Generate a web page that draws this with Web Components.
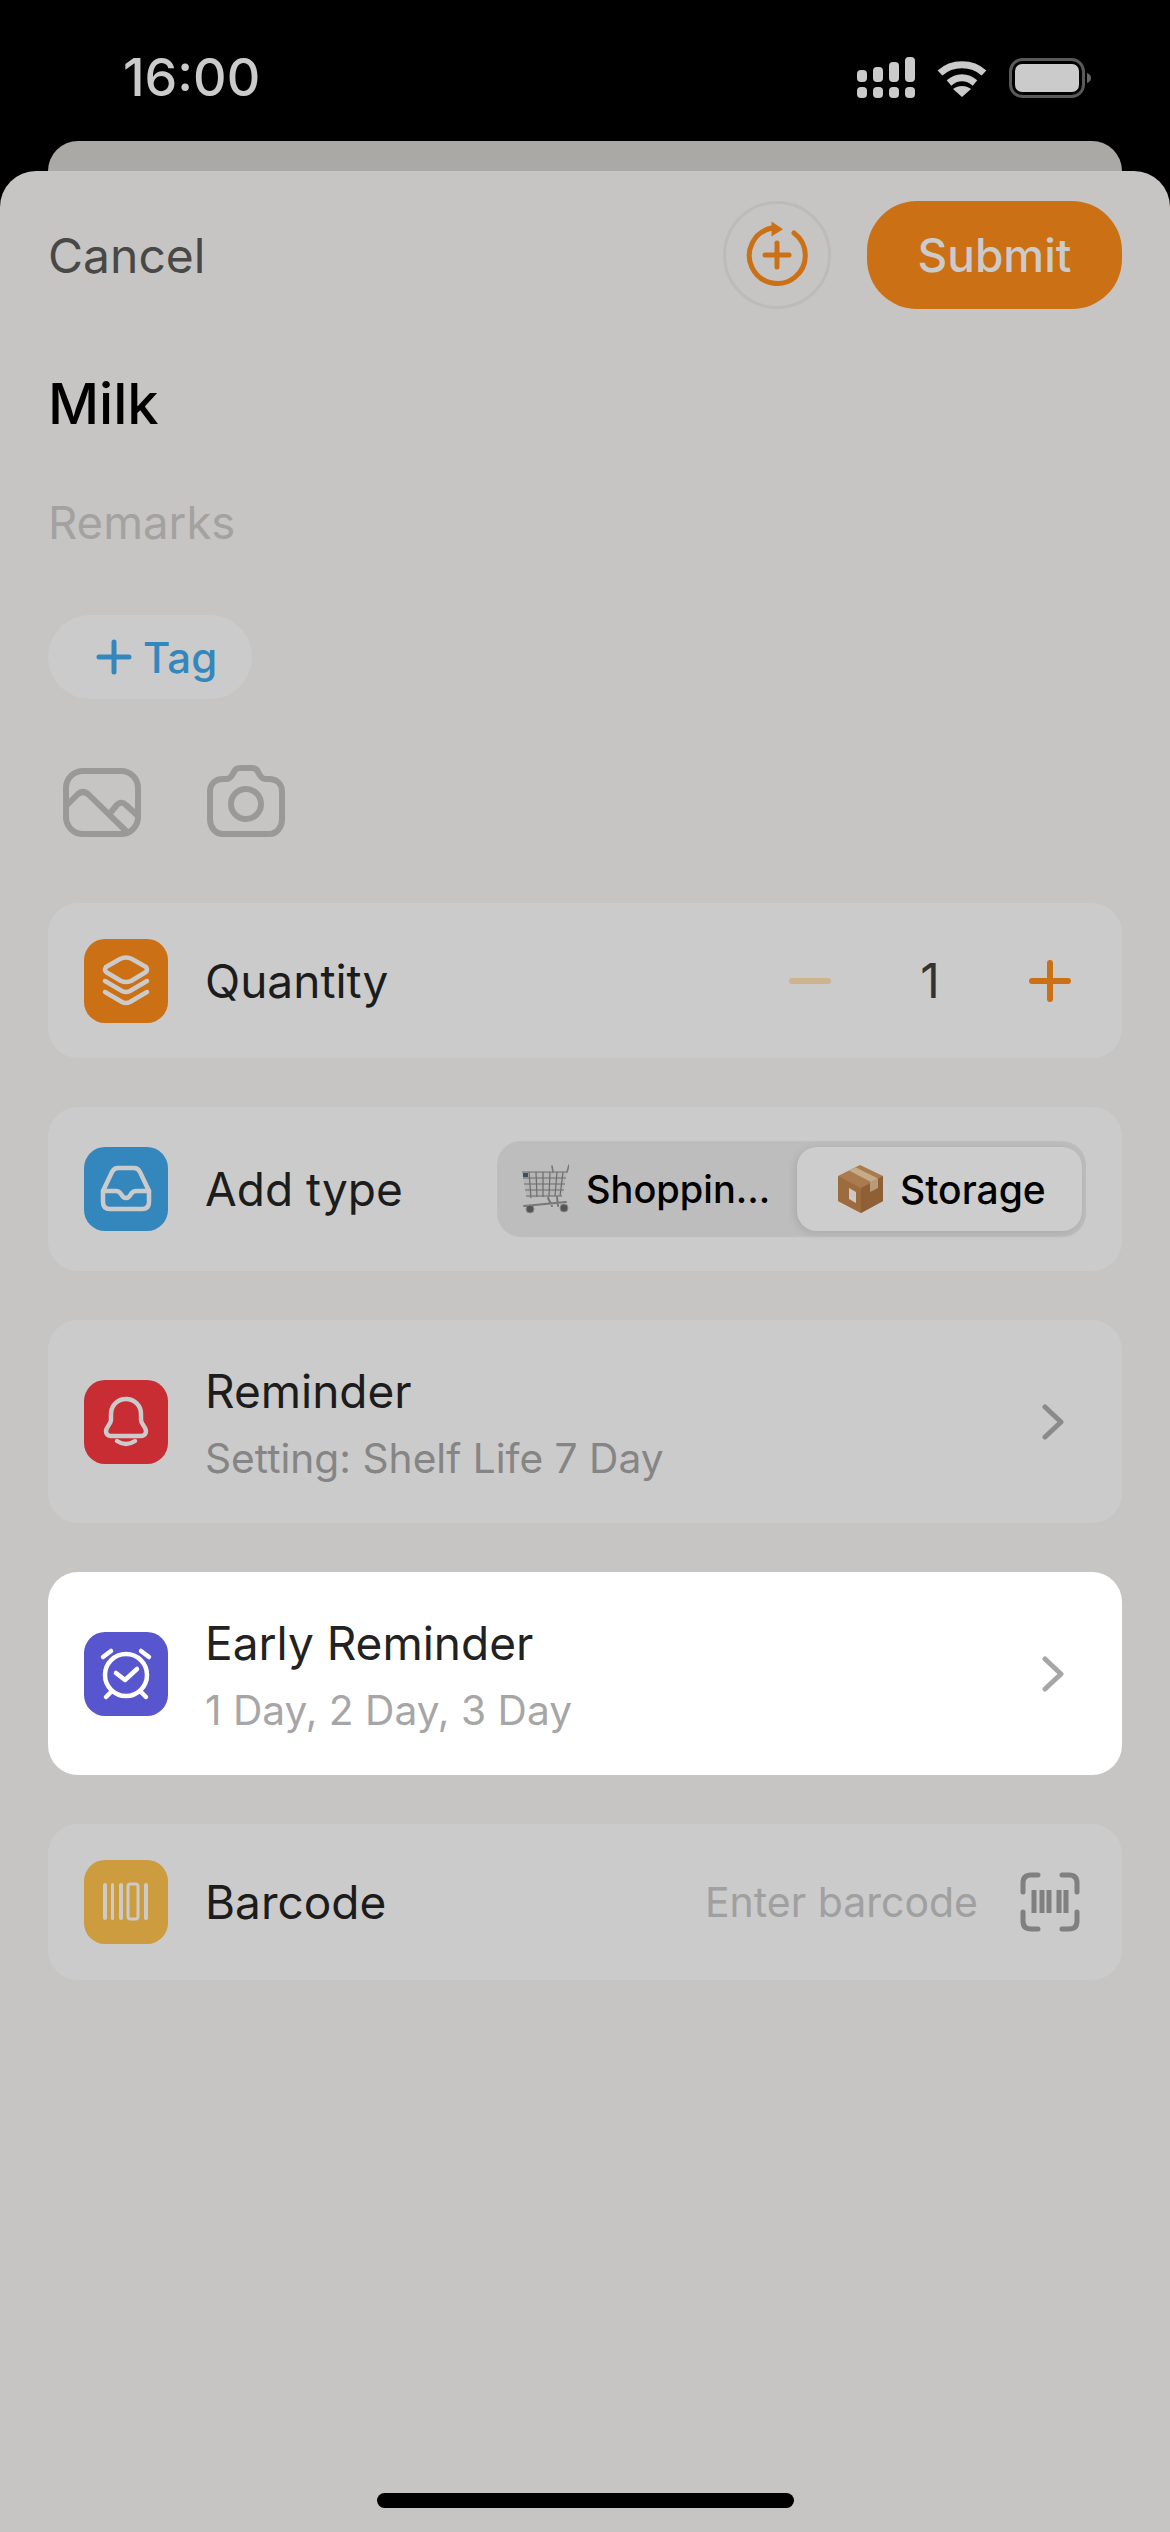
<!doctype html>
<html>
<head>
<meta charset="utf-8">
<style>
  html, body { margin: 0; padding: 0; background: #000; }
  body { font-family: Inter, "Noto Sans", sans-serif; width: 1170px; height: 2532px; overflow: hidden; }
</style>
</head>
<body>
<add-screen></add-screen>
<script>
class StatusBar extends HTMLElement {
  constructor() {
    super();
    this.attachShadow({ mode: "open" });
    this.shadowRoot.innerHTML = `
      <style>
        :host { display: flex; justify-content: space-between; align-items: flex-start; height: 141px; box-sizing: border-box; padding: 57px 79px 0 123px; background: #000; color: #cbcbcb; }
        .time { font-size: 52px; font-weight: 500; line-height: 42px; }
        .icons { display: flex; gap: 22px; }
        svg { display: block; }
      </style>
      <div class="time">16:00</div>
      <div class="icons">
        <svg width="58" height="41" viewBox="0 0 58 41" fill="#cbcbcb">
          <rect x="0" y="13" width="10" height="12" rx="4"/><rect x="16" y="10" width="10" height="15" rx="4"/>
          <rect x="32" y="5" width="10" height="20" rx="4"/><rect x="48" y="0" width="10" height="25" rx="4"/>
          <rect x="0" y="30" width="10" height="11" rx="4"/><rect x="16" y="30" width="10" height="11" rx="4"/>
          <rect x="32" y="30" width="10" height="11" rx="4"/><rect x="48" y="30" width="10" height="11" rx="4"/>
        </svg>
        <svg width="50" height="39" viewBox="0 0 50 39" style="margin-top:2px">
          <path d="M3 14 C15 3 35 3 47 14" fill="none" stroke="#cbcbcb" stroke-width="7"/>
          <path d="M12 24 C20 17 30 17 38 24" fill="none" stroke="#cbcbcb" stroke-width="7"/>
          <path d="M25 38 L16 30 C21 26 29 26 34 30 Z" fill="#cbcbcb"/>
        </svg>
        <svg width="82" height="40" viewBox="0 0 82 40" style="margin-top:1px">
          <rect x="1.5" y="1.5" width="73" height="37" rx="12" fill="none" stroke="#595959" stroke-width="3"/>
          <rect x="6" y="6" width="64" height="28" rx="7" fill="#cbcbcb"/>
          <path d="M78 15 C81 16 82 18 82 20 C82 22 81 24 78 25 Z" fill="#666"/>
        </svg>
      </div>
    `;
  }
}
customElements.define("status-bar", StatusBar);

class SheetHeader extends HTMLElement {
  constructor() {
    super();
    this.attachShadow({ mode: "open" });
    this.shadowRoot.innerHTML = `
      <style>
        :host { display: flex; align-items: center; height: 108px; }
        .cancel { font-size: 48px; color: #484846; flex: 1; }
        .round { width: 108px; height: 108px; box-sizing: border-box; border-radius: 50%; border: 3px solid #bcbbb9; margin-right: 36px; }
        .round svg { display: block; margin: -3px; }
        .submit { width: 255px; height: 108px; border-radius: 50px; background: #cb7015; color: #cbcbcb; font-size: 46px; font-weight: 500; display: flex; align-items: center; justify-content: center; }
      </style>
      <div class="cancel">Cancel</div>
      <div class="round">
        <svg width="108" height="108" viewBox="0 0 108 108" fill="none" stroke="#cb7015" stroke-width="5" stroke-linecap="round">
          <path d="M71 32 A28 28 0 1 1 49 27"/>
          <path d="M48.5 20.5 L60 28.3 L48.5 35.5 Z" fill="#cb7015" stroke="none"/>
          <path d="M54 42 V66 M42 54 H66"/>
        </svg>
      </div>
      <div class="submit">Submit</div>
    `;
  }
}
customElements.define("sheet-header", SheetHeader);

class TagPill extends HTMLElement {
  constructor() {
    super();
    this.attachShadow({ mode: "open" });
    this.shadowRoot.innerHTML = `
      <style>
        :host { display: flex; align-items: center; gap: 11px; box-sizing: border-box; padding-left: 48px; width: 204px; height: 84px; border-radius: 42px; background: #cbcbcb; color: #3487bd; font-size: 42px; font-weight: 500; }
        svg { display: block; }
      </style>
      <svg width="36" height="36" viewBox="0 0 36 36" fill="none" stroke="#3487bd" stroke-width="5" stroke-linecap="round"><path d="M18 3 V33 M3 18 H33"/></svg>
      <span>Tag</span>
    `;
  }
}
customElements.define("tag-pill", TagPill);

class IconTile extends HTMLElement {
  constructor() {
    super();
    this.attachShadow({ mode: "open" });
    this.shadowRoot.innerHTML = `
      <style>
        :host { display: block; width: 84px; height: 84px; flex: none; border-radius: 21px; background: var(--tile, #888); }
        ::slotted(svg) { display: block; }
      </style>
      <slot></slot>
    `;
  }
}
customElements.define("icon-tile", IconTile);

class AppRow extends HTMLElement {
  constructor() {
    super();
    this.attachShadow({ mode: "open" });
    this.shadowRoot.innerHTML = `
      <style>
        :host { display: flex; align-items: center; box-sizing: border-box; padding: 0 36px; border-radius: 30px; background: #cbcbcb; color: #1c1c1c; height: var(--h, 155px); }
        :host([lit]) { background: #fff; color: #222; --sub: #a6a6a6; }
        :host([sub]) .label { padding-top: 4px; }
        .label { margin-left: 37px; flex: 1; min-width: 0; }
        .title { font-size: 46px; line-height: 56px; }
        .sub { font-size: 40.7px; line-height: 50px; margin-top: 15px; color: var(--sub, #858585); }
        .sub:empty { display: none; }
        .end { display: flex; align-items: center; }
      </style>
      <slot name="icon"></slot>
      <div class="label">
        <div class="title"></div>
        <div class="sub"></div>
      </div>
      <div class="end"><slot></slot></div>
    `;
  }
  connectedCallback() {
    this.shadowRoot.querySelector(".title").textContent = this.getAttribute("title-text") || "";
    this.shadowRoot.querySelector(".sub").textContent = this.getAttribute("sub") || "";
  }
}
customElements.define("app-row", AppRow);

class QtyStepper extends HTMLElement {
  constructor() {
    super();
    this.attachShadow({ mode: "open" });
    this.shadowRoot.innerHTML = `
      <style>
        :host { display: flex; align-items: center; margin-right: 15px; }
        svg { display: block; }
        .n { width: 198px; text-align: center; font-size: 48px; color: #333; }
      </style>
      <svg width="42" height="42" viewBox="0 0 42 42" fill="none" stroke="#cdb48f" stroke-width="6" stroke-linecap="round"><path d="M3 21 H39"/></svg>
      <div class="n">1</div>
      <svg width="42" height="42" viewBox="0 0 42 42" fill="none" stroke="#cb7015" stroke-width="6" stroke-linecap="round"><path d="M3 21 H39 M21 3 V39"/></svg>
    `;
  }
}
customElements.define("qty-stepper", QtyStepper);

class TypeSwitch extends HTMLElement {
  constructor() {
    super();
    this.attachShadow({ mode: "open" });
    this.shadowRoot.innerHTML = `
      <style>
        :host { display: flex; align-items: center; box-sizing: border-box; width: 589px; height: 96px; padding: 6px 4px 6px 0; border-radius: 24px; background: #bdbdbd; font-size: 38px; font-weight: 500; color: #000; }
        .opt { display: flex; align-items: center; height: 84px; box-sizing: border-box; }
        .off { width: 300px; padding-left: 24px; gap: 17px; }
        .on { flex: 1; padding-left: 40px; gap: 16px; background: #cdcdcd; border-radius: 20px; box-shadow: -2px 2px 8px rgba(0,0,0,.1); font-size: 39px; }
        svg { display: block; flex: none; }
      </style>
      <div class="opt off">
        <svg width="48" height="50" viewBox="0 0 48 50" fill="none">
          <path d="M1 8 H46 L41 32 L6 34 Z" fill="#b5b5b5"/>
          <path d="M1 8 H46 M2 14 H45 M3 20 H44 M4 26 H43 M5 32 H41 M8 8 L10 34 M15 8 L16 33 M22 8 L22 33 M29 8 L28 33 M36 8 L34 32 M42 8 L39 32" stroke="#6d6d6d" stroke-width="1.2"/>
          <path d="M46 8 L48 1 M31 2 L32 8" stroke="#777" stroke-width="1.6" stroke-linecap="round"/>
          <path d="M27 34 L31 42 M36 33 L37 42 M3 42 L45 38" stroke="#777" stroke-width="2" stroke-linecap="round"/>
          <rect x="2" y="9" width="5" height="4" fill="#3f4d63"/>
          <circle cx="9" cy="45" r="4" fill="#555" stroke="#888"/>
          <circle cx="43" cy="44" r="4" fill="#555" stroke="#888"/>
        </svg>
        <span>Shoppin...</span>
      </div>
      <div class="opt on">
        <svg width="47" height="50" viewBox="0 0 47 50">
          <path d="M23 1 L46 12 L46 37 L24 49 L1 37 L1 12 Z" fill="#a97b4f"/>
          <path d="M1 12 L24 24 V49 L1 37 Z" fill="#9c6c3f"/>
          <path d="M24 24 L46 12 V37 L24 49 Z" fill="#8f5f35"/>
          <path d="M12 6.5 L34 18 L41 14.5 L19 3.5 Z" fill="#c6ab88"/>
          <path d="M33 18.5 L41 14.5 V24 L33 28 Z" fill="#b79b7a"/>
          <path d="M12 24 L19 28 V39 L12 35 Z" fill="#c9c9c9"/>
        </svg>
        <span>Storage</span>
      </div>
    `;
  }
}
customElements.define("type-switch", TypeSwitch);

class RowChevron extends HTMLElement {
  constructor() {
    super();
    this.attachShadow({ mode: "open" });
    this.shadowRoot.innerHTML = `
      <style>
        :host { display: block; margin-right: 21px; }
        svg { display: block; }
      </style>
      <svg width="24" height="36" viewBox="0 0 24 36" fill="none" stroke="var(--chev, #8a8a8a)" stroke-width="5" stroke-linecap="round" stroke-linejoin="round"><path d="M4 3 L20 18 L4 33"/></svg>
    `;
  }
}
customElements.define("row-chevron", RowChevron);

class BarcodeEnd extends HTMLElement {
  constructor() {
    super();
    this.attachShadow({ mode: "open" });
    this.shadowRoot.innerHTML = `
      <style>
        :host { display: flex; align-items: center; gap: 42px; margin-right: 6px; }
        span { font-size: 41px; color: #a0a0a0; }
        svg { display: block; }
      </style>
      <span>Enter barcode</span>
      <svg width="60" height="60" viewBox="0 0 60 60" fill="none" stroke="#808080" stroke-width="5" stroke-linecap="round">
        <path d="M3 20 V11 Q3 3 11 3 H18 M42 3 H49 Q57 3 57 11 V20 M57 40 V49 Q57 57 49 57 H42 M18 57 H11 Q3 57 3 49 V40"/>
        <path d="M14 18 V41 M22 18 V41 M29 18 V41 M39 18 V41 M46 18 V41" stroke-linecap="butt"/>
      </svg>
    `;
  }
}
customElements.define("barcode-end", BarcodeEnd);

class AddSheet extends HTMLElement {
  constructor() {
    super();
    this.attachShadow({ mode: "open" });
    this.shadowRoot.innerHTML = `
      <style>
        :host { display: flex; flex-direction: column; box-sizing: border-box; height: 2361px; padding: 30px 48px 24px; background: #c6c5c3; border-radius: 36px 36px 0 0; }
        .name { margin-top: 61px; font-size: 56px; line-height: 68px; font-weight: 500; color: #000; }
        .remarks { margin-top: 58px; font-size: 45.5px; line-height: 54px; color: #a3a2a1; }
        tag-pill { margin-top: 65px; }
        .media { display: flex; align-items: flex-end; margin-top: 66px; height: 72px; padding-left: 15px; gap: 66px; }
        .media svg { display: block; }
        .rows { display: flex; flex-direction: column; gap: 49px; margin-top: 66px; }
        .home { margin: auto auto 0; width: 417px; height: 15px; border-radius: 8px; background: #000; }
      </style>
      <sheet-header></sheet-header>
      <div class="name">Milk</div>
      <div class="remarks">Remarks</div>
      <tag-pill></tag-pill>
      <div class="media">
        <svg width="78" height="69" viewBox="0 0 78 69" fill="none" stroke="#9a9997" stroke-width="6" stroke-linecap="round" stroke-linejoin="round">
          <rect x="3" y="3" width="72" height="63" rx="17"/>
          <path d="M4 37 L14 27 Q20 21 26 27 L64 64 M48 44 L53 38 Q58 32 63 37 L75 48"/>
        </svg>
        <svg width="78" height="72" viewBox="0 0 78 72" fill="none" stroke="#9a9997" stroke-width="6" stroke-linejoin="round">
          <path d="M16 14 H20 C24 14 25 10 27 7 C28 4 30 3 33 3 H45 C48 3 50 4 51 7 C53 10 54 14 58 14 H62 C70 14 75 19 75 27 V54 C75 62 70 69 62 69 H16 C8 69 3 62 3 54 V27 C3 19 8 14 16 14 Z"/>
          <circle cx="39" cy="39" r="15"/>
        </svg>
      </div>
      <div class="rows">
        <app-row title-text="Quantity" style="--h:155px">
          <icon-tile slot="icon" style="--tile:#cb7015">
            <svg width="84" height="84" viewBox="0 0 84 84" fill="none" stroke="#cbcbcb" stroke-width="4.5" stroke-linecap="round" stroke-linejoin="round">
              <path d="M36 20 Q42 17 48 20 L62 28 Q64 31 62 33 L47 42 Q42 44 37 42 L22 33 Q20 31 22 28 Z"/>
              <path d="M21 42 L38 52 Q42 54 46 52 L63 42 M21 53 L38 63 Q42 65 46 63 L63 53"/>
            </svg>
          </icon-tile>
          <qty-stepper></qty-stepper>
        </app-row>
        <app-row title-text="Add type" style="--h:164px">
          <icon-tile slot="icon" style="--tile:#3487bd">
            <svg width="84" height="84" viewBox="0 0 84 84" fill="none" stroke="#cbcbcb" stroke-width="4.5" stroke-linecap="round" stroke-linejoin="round">
              <path d="M19 44 L28 25 Q30 21 34 21 H50 Q54 21 56 25 L65 44 V55 Q65 62 58 62 H26 Q19 62 19 55 Z"/>
              <path d="M19 44 H32 Q35 44 37 47 Q39 51 42 51 Q45 51 47 47 Q49 44 52 44 H65"/>
            </svg>
          </icon-tile>
          <type-switch></type-switch>
        </app-row>
        <app-row title-text="Reminder" sub="Setting: Shelf Life 7 Day" style="--h:203px">
          <icon-tile slot="icon" style="--tile:#c72d32">
            <svg width="84" height="84" viewBox="0 0 84 84" fill="none" stroke="#cbcbcb" stroke-width="4.5" stroke-linecap="round" stroke-linejoin="round">
              <path d="M42 19 C33 19 27 26 27 34 V40 C27 44 22 47 22 51 C22 54 24 56 27 56 H57 C60 56 62 54 62 51 C62 47 57 44 57 40 V34 C57 26 51 19 42 19 Z"/>
              <path d="M33 61 Q42 67 51 61"/>
            </svg>
          </icon-tile>
          <row-chevron></row-chevron>
        </app-row>
        <app-row lit title-text="Early Reminder" sub="1 Day, 2 Day, 3 Day" style="--h:203px;--chev:#a6a6a6">
          <icon-tile slot="icon" style="--tile:#5756ce">
            <svg width="84" height="84" viewBox="0 0 84 84" fill="none" stroke="#fff" stroke-width="4.5" stroke-linecap="round" stroke-linejoin="round">
              <circle cx="42" cy="43" r="21"/>
              <path d="M19 25 L27 19 M57 19 L65 25 M22 65 L27 60 M57 60 L62 65 M32 41 L41 48 L53 37"/>
            </svg>
          </icon-tile>
          <row-chevron></row-chevron>
        </app-row>
        <app-row title-text="Barcode" style="--h:156px">
          <icon-tile slot="icon" style="--tile:#cd9c3e">
            <svg width="84" height="84" viewBox="0 0 84 84" fill="#cbcbcb">
              <rect x="19" y="23" width="4" height="37" rx="2"/><rect x="27" y="23" width="3" height="37" rx="1.5"/>
              <rect x="35" y="23" width="4" height="37" rx="2"/>
              <rect x="44" y="24" width="10" height="35" rx="2.5" fill="none" stroke="#cbcbcb" stroke-width="3"/>
              <rect x="60" y="23" width="4" height="37" rx="2"/>
            </svg>
          </icon-tile>
          <barcode-end></barcode-end>
        </app-row>
      </div>
      <div class="home"></div>
    `;
  }
}
customElements.define("add-sheet", AddSheet);

class AddScreen extends HTMLElement {
  constructor() {
    super();
    this.attachShadow({ mode: "open" });
    this.shadowRoot.innerHTML = `
      <style>
        :host { display: block; height: 2532px; background: #000; }
        .back { height: 30px; margin: 0 48px; background: #aaa9a6; border-radius: 30px 30px 0 0; }
      </style>
      <status-bar></status-bar>
      <div class="back"></div>
      <add-sheet></add-sheet>
    `;
  }
}
customElements.define("add-screen", AddScreen);
</script>
</body>
</html>
